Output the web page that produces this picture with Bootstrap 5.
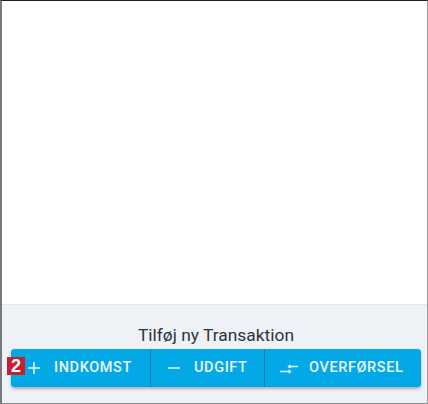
<!DOCTYPE html>
<html lang="en">
<head>
  <meta charset="UTF-8" />
  <title>Tilføj ny Transaktion</title>
  <link href="https://cdn.jsdelivr.net/npm/bootstrap@5.3.0/dist/css/bootstrap.min.css" rel="stylesheet" />
  <style>
    html, body { height: 404px; overflow: hidden; background: #fff; font-family: Roboto, "Liberation Sans", sans-serif; }
    .app-frame { height: 404px; border-top: 1px solid #222; border-left: 2px solid #77797d; border-right: 1px solid #9a9b9e; border-bottom: 1px solid #8a8b8e; }
    .app-content { flex: 1 1 auto; background: #fff; }
    .tx-panel { height: 99px; background: #eef1f6; border-top: 1px solid #e3e5e9; padding: 20px 6px 0 9px; }
    .tx-title { font-size: 17.4px; line-height: 20px; color: #2d3540; margin-bottom: 4px; }
    .tx-group { height: 38px; width: 410px; background: #03a9e6; border-radius: 4px; box-shadow: 0 2px 3px rgba(0,0,0,.28); }
    .tx-group .btn { background: #03a9e6; border: 0; border-radius: 0; color: #e6f6fd; font-size: 14.5px; font-weight: 500; letter-spacing: .6px; padding: 0; flex: 0 0 auto; }
    .tx-group .btn:first-child { border-radius: 4px 0 0 4px; }
    .tx-group .btn:last-child { border-radius: 0 4px 4px 0; }
    .tx-group .btn + .btn { border-left: 1px solid #0a7fae; }
    .tx-income { width: 139px; gap: 13px; padding-left: 16px !important; }
    .tx-expense { width: 114px; gap: 13px; padding-left: 16px !important; }
    .tx-transfer { width: 157px; gap: 11px; padding-left: 15px !important; }
    .tx-step { position: absolute; left: 7px; top: 357px; width: 18px; height: 18px; background: #c8202f; color: #fff; font: 700 18px/18px "Liberation Sans", sans-serif; text-align: center; z-index: 2; }
  </style>
</head>
<body>
  <div class="app-frame d-flex flex-column">
    <div class="app-content"></div>
    <div class="tx-panel">
      <div class="tx-title text-center">Tilføj ny Transaktion</div>
      <div class="tx-group d-flex">
        <button class="btn tx-income d-flex align-items-center">
          <svg width="14" height="14" viewBox="0 0 14 14"><path d="M7 1v12M1 7h12" stroke="#e6f6fd" stroke-width="1.5" fill="none"/></svg>
          <span>INDKOMST</span>
        </button>
        <button class="btn tx-expense d-flex align-items-center">
          <svg width="14" height="14" viewBox="0 0 14 14"><path d="M1 7h12" stroke="#e6f6fd" stroke-width="1.5" fill="none"/></svg>
          <span>UDGIFT</span>
        </button>
        <button class="btn tx-transfer d-flex align-items-center">
          <svg width="18" height="14" viewBox="0 0 18 14"><path d="M0 10.500h10M8.500 9l2 1.500-2 1.500M18 5.500H9M10.500 4L8.500 5.500l2 1.500" stroke="#e6f6fd" stroke-width="1.4" fill="none"/></svg>
          <span>OVERFØRSEL</span>
        </button>
      </div>
    </div>
  </div>
  <div class="tx-step">2</div>
  <script src="https://cdn.jsdelivr.net/npm/bootstrap@5.3.0/dist/js/bootstrap.bundle.min.js"></script>
</body>
</html>
